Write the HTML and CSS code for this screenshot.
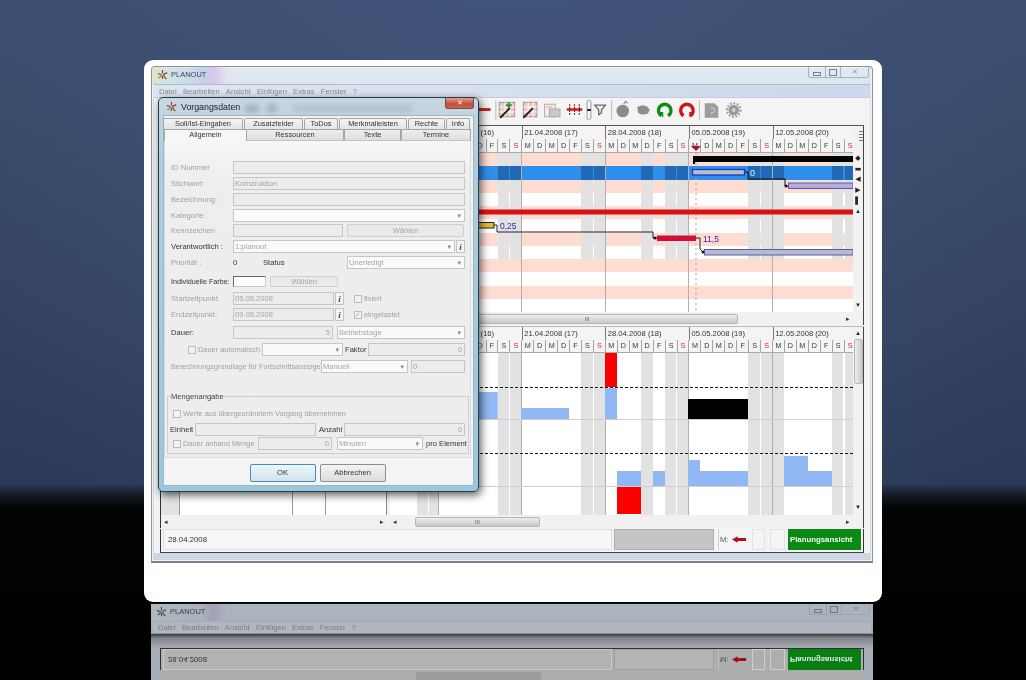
FILE: index.html
```html
<!DOCTYPE html>
<html lang="de">
<head>
<meta charset="utf-8">
<title>PLANOUT</title>
<link rel="stylesheet" href="styles.css">
</head>
<body>
<div class="stage">
  <div class="card">
    <div class="win">
      <div class="titlebar">
        <svg class="appicon" viewBox="0 0 12 12"><path d="M6 1v4M1 5l4 1M2 10l3-3M7 6l4-2M7 7l3 4M6 7v4" stroke="#7a4a3a" stroke-width="1.3" fill="none"/><path d="M7 6l4-2" stroke="#c03030" stroke-width="1.3"/><path d="M2 10l3-3" stroke="#c8a020" stroke-width="1.3"/></svg>
        <span class="apptitle">PLANOUT</span>
        <div class="winctl"><span class="wb wb-min"><b class="ic-min"></b></span><span class="wb wb-max"><b class="ic-max"></b></span><span class="wb wb-close">&#x2715;</span></div>
      </div>
      <div class="menubar"><span>Datei</span><span>Bearbeiten</span><span>Ansicht</span><span>Einfügen</span><span>Extras</span><span>Fenster</span><span>?</span></div>
      <div class="client">
        <div class="toolbar">
          <svg class="tb" width="400" height="26" viewBox="0 0 400 26">
            <rect x="1" y="11" width="12" height="3" fill="#c81e1e"/>
            <path d="M18.500 3v20M138.500 3v20M229.500 3v20" stroke="#b9b9b9"/>
            <g><rect x="22" y="5" width="16" height="15" fill="#f0c8c0" stroke="#9a9090"/><path d="M22 10h16M22 15h16M28 5v15M33 5v15" stroke="#fff"/><path d="M23 21l10-10" stroke="#222" stroke-width="2"/><path d="M32 5v6M29 8h6" stroke="#1f9a30" stroke-width="2"/></g>
            <g><rect x="47" y="5" width="14" height="15" fill="#f0c8c0" stroke="#9a9090"/><path d="M47 10h14M47 15h14M52 5v15M57 5v15" stroke="#fff"/><path d="M47 21l10-10" stroke="#222" stroke-width="2"/></g>
            <g><rect x="69" y="7" width="11" height="13" fill="#f6ece8" stroke="#b9a9a0"/><rect x="74" y="12" width="11" height="8" fill="#c9c9c9" stroke="#a9a9a9"/><path d="M71 10h6" stroke="#e09a90"/></g>
            <g><path d="M92 12.500h16" stroke="#d01818" stroke-width="2.500"/><path d="M95 7v11M100 7v11M105 7v11" stroke="#7c2020" stroke-width="1.200" stroke-dasharray="2 1"/></g>
            <rect x="113" y="3" width="4" height="20" rx="1.500" fill="#f6f6f6" stroke="#9a9a9a"/><rect x="113" y="12" width="4" height="2" fill="#222"/>
            <path d="M121 8h11l-4 5v3l-3 2v-5z" fill="#e8e8e8" stroke="#6a6a6a" stroke-width="1.300"/>
            <circle cx="150" cy="14" r="6.500" fill="#8c8c8c"/><path d="M151 7l2-3 2 2" stroke="#999" stroke-width="1.500" fill="none"/>
            <path d="M165 10l5-2 5 1 3 4-2 4-6 1-4-2z" fill="#8e8e8e"/>
            <path d="M190 19a6.500 6.500 0 1 1 7 0" stroke="#108a18" stroke-width="3.500" fill="none"/><path d="M187 15l5 0 0 6z" fill="#108a18"/>
            <path d="M213 19a6.500 6.500 0 1 1 7 0" stroke="#cc1414" stroke-width="3.500" fill="none"/><path d="M224 15l-5 0 0 6z" fill="#cc1414"/>
            <path d="M235 6h10l4 4v11h-14z" fill="#9c9c9c"/><path d="M241 11q4-1 4 2t-3 3v2" stroke="#c4c4c4" fill="none" stroke-width="1.300"/>
            <circle cx="265" cy="13" r="5.500" fill="#999"/><circle cx="265" cy="13" r="7" fill="none" stroke="#999" stroke-width="2" stroke-dasharray="2 1.600"/><circle cx="265" cy="13" r="2" fill="#d4d4d4"/>
          </svg>
        </div>

        <div class="pane pane-top">
          <div class="leftpane"></div>
          <div class="gantt">
            <div class="g-main">
              <div class="weeks"><span class="wk wk-first"></span><span class="wk">14.04.2008 (16)</span><span class="wk">21.04.2008 (17)</span><span class="wk">28.04.2008 (18)</span><span class="wk">05.05.2008 (19)</span><span class="wk">12.05.2008 (20)</span></div>
              <div class="days"><span>D</span><span>F</span><span>S</span><span class="sun">S</span><span>M</span><span>D</span><span>M</span><span>D</span><span>F</span><span>S</span><span class="sun">S</span><span>M</span><span>D</span><span>M</span><span>D</span><span>F</span><span>S</span><span class="sun">S</span><span>M</span><span>D</span><span>M</span><span>D</span><span>F</span><span>S</span><span class="sun">S</span><span>M</span><span>D</span><span>M</span><span>D</span><span>F</span><span>S</span><span class="sun">S</span><span>M</span><span>D</span><span>M</span><span>D</span><span>F</span><span>S</span><span class="sun">S</span></div>
              <div class="chart chart-top">
                <div class="row pink"></div><div class="row blue"></div><div class="row pink"></div><div class="row"></div>
                <div class="row pink"></div><div class="row"></div><div class="row pink"></div><div class="row"></div>
                <div class="row pink plain"></div><div class="row plain"></div><div class="row pink plain"></div><div class="row plain"></div>
                <svg class="overlay" width="463" height="159" viewBox="0 0 463 159">
                  <path d="M306 0v159" stroke="#c9aaaa" stroke-width="1.200" stroke-dasharray="2 3"/>
                  <path d="M301-7h10l-5 5z" fill="#a8122e"/>
                  <rect x="303" y="3" width="160" height="6" fill="#000"/><rect x="303" y="3" width="2" height="8" fill="#000"/>
                  <rect x="302.500" y="16.500" width="52" height="5.500" fill="#bcbcc6" stroke="#0c3cc0" stroke-width="1.300"/>
                  <text x="360" y="23" class="lbl-white">0</text>
                  <path d="M355 19h3v7h37v7h3" fill="none" stroke="#111"/><circle cx="396" cy="33" r="1.500" fill="#111"/>
                  <rect x="398.500" y="30" width="64.500" height="5.500" fill="#b4aed4" stroke="#5c54b8"/>
                  <rect x="0" y="56.500" width="463" height="5" fill="#dc1010"/>
                  <rect x="60" y="69.500" width="44" height="5.500" fill="#e6bf2c" stroke="#222"/>
                  <text x="110" y="76" class="lbl-blue">0,25</text>
                  <path d="M104 72h3v7h156v6h4" fill="none" stroke="#222"/><circle cx="265" cy="85" r="1.500" fill="#111"/>
                  <rect x="267" y="82.500" width="39" height="5.500" fill="#d00e38"/>
                  <text x="313" y="89" class="lbl-violet">11,5</text>
                  <path d="M306 85h4v11l3 3h2" fill="none" stroke="#222"/><circle cx="313" cy="99" r="1.500" fill="#111"/>
                  <rect x="314.500" y="96.500" width="148.500" height="5.500" fill="#babbc4" stroke="#5058c0"/>
                </svg>
              </div>
              <div class="hscroll"><span class="arr"></span><span class="thumb thumb-top">III</span><span class="arr arr-r">&#x25B8;</span></div>
            </div>
            <div class="g-side">
              <div class="ruler"></div>
              <span class="sb sb-dia">&#x25C6;</span><span class="sb">&#x25AC;</span><span class="sb">&#x25C0;</span><span class="sb">&#x25B6;</span><span class="sb">&#x258C;</span><span class="sb">&#x25B4;</span>
              <span class="sb sb-down">&#x25BE;</span>
            </div>
          </div>
        </div>

        <div class="pane pane-bottom">
          <div class="leftpane lp-lines">
            <div class="lp-body"></div>
            <div class="hscroll"><span class="arr">&#x25C2;</span><span class="arr arr-r">&#x25B8;</span></div>
          </div>
          <div class="gantt">
            <div class="g-main">
              <div class="weeks"><span class="wk wk-first"></span><span class="wk">14.04.2008 (16)</span><span class="wk">21.04.2008 (17)</span><span class="wk">28.04.2008 (18)</span><span class="wk">05.05.2008 (19)</span><span class="wk">12.05.2008 (20)</span></div>
              <div class="days"><span>D</span><span>F</span><span>S</span><span class="sun">S</span><span>M</span><span>D</span><span>M</span><span>D</span><span>F</span><span>S</span><span class="sun">S</span><span>M</span><span>D</span><span>M</span><span>D</span><span>F</span><span>S</span><span class="sun">S</span><span>M</span><span>D</span><span>M</span><span>D</span><span>F</span><span>S</span><span class="sun">S</span><span>M</span><span>D</span><span>M</span><span>D</span><span>F</span><span>S</span><span class="sun">S</span><span>M</span><span>D</span><span>M</span><span>D</span><span>F</span><span>S</span><span class="sun">S</span></div>
              <div class="chart chart-load load">
                <svg class="overlay" width="463" height="162" viewBox="0 0 463 162">
                  <g fill="#8fb8f4">
                    <rect x="215" y="35" width="12" height="32"/><rect x="60" y="39" width="47.700" height="28"/><rect x="131" y="55" width="48" height="12"/>
                    <rect x="227" y="118" width="24" height="15"/><rect x="263" y="118" width="12" height="15"/><rect x="298" y="107" width="12" height="26"/><rect x="310" y="118" width="48" height="15"/><rect x="394" y="103" width="24" height="30"/><rect x="418" y="118" width="24" height="15"/>
                  </g>
                  <g fill="#fb0000"><rect x="215" y="0" width="12" height="34"/><rect x="227" y="133" width="24" height="28"/></g>
                  <rect x="298" y="46" width="60" height="21" fill="#000"/>
                  <path d="M0 34.500h463M0 100.500h463" stroke="#111" stroke-dasharray="3 2"/>
                  <path d="M0 66.500h463M0 133.500h463" stroke="#cfcfcf"/>
                </svg>
              </div>
              <div class="hscroll"><span class="arr">&#x25C2;</span><span class="thumb thumb-bottom">III</span><span class="arr arr-r">&#x25B8;</span></div>
            </div>
            <div class="g-side">
              <span class="sb sb-up">&#x25B4;</span>
              <span class="vthumb"></span>
              <span class="sb sb-down2">&#x25BE;</span>
            </div>
          </div>
        </div>

        <div class="status">
          <span class="st-date">28.04.2008</span>
          <span class="st-progress"></span>
          <span class="st-m">M: <svg width="15" height="7" viewBox="0 0 16 7"><path d="M0 3.500L6 0v2h9v3H6v2z" fill="#b01020"/></svg></span>
          <span class="st-cell st-a"></span>
          <span class="st-cell st-b"></span>
          <span class="st-green">Planungsansicht</span>
        </div>
      </div>
    </div>

    <div class="dialog">
      <div class="dlg-title">
        <svg class="appicon" viewBox="0 0 12 12"><path d="M6 1v4M1 5l4 1M2 10l3-3M7 6l4-2M7 7l3 4M6 7v4" stroke="#7a4a3a" stroke-width="1.300" fill="none"/><path d="M7 6l4-2" stroke="#c03030" stroke-width="1.300"/><path d="M2 10l3-3" stroke="#c8a020" stroke-width="1.300"/></svg>
        <span class="dlg-name">Vorgangsdaten</span>
        <span class="ghost ghost-a"></span><span class="ghost ghost-b"></span><span class="ghost ghost-c"></span>
        <span class="dlg-close">&#x2715;</span>
      </div>
      <div class="dlg-client">
        <div class="tabs-back"><span class="t1">Soll/Ist-Eingaben</span><span class="t2">Zusatzfelder</span><span class="t3">ToDos</span><span class="t4">Merkmalleisten</span><span class="t5">Rechte</span><span class="t6">Info</span></div>
        <div class="tabs-front"><span class="tf1">Allgemein</span><span class="tf2">Ressourcen</span><span class="tf3">Texte</span><span class="tf4">Termine</span></div>
        <div class="panel">
          <div class="frow"><label class="lb">ID Nummer</label><span class="f w232"></span></div>
          <div class="frow"><label class="lb">Stichwort:</label><span class="f w232">Konstruktion</span></div>
          <div class="frow"><label class="lb">Bezeichnung:</label><span class="f w232"></span></div>
          <div class="frow"><label class="lb">Kategorie:</label><span class="f white combo w232"></span></div>
          <div class="frow tight"><label class="lb">Kennzeichen</label><span class="f w110"></span><span class="btn w117 ml4">Wählen</span></div>
          <div class="frow"><label class="lb dark">Verantwortlich :</label><span class="f white combo w222">1:planout</span><span class="info ml1">i</span></div>
          <div class="frow"><label class="lb">Priorität :</label><span class="val w30">0</span><span class="val w84 dark">Status</span><span class="f white combo w118">Unerledigt</span></div>
          <div class="frow mt3"><label class="lb lb-tight dark">Individuelle Farbe:</label><span class="swatch"></span><span class="btn w68 ml4 h11">Wählen</span></div>
          <div class="frow mt1"><label class="lb">Startzeitpunkt:</label><span class="f w101">05.05.2008</span><span class="info ml1">i</span><span class="cb ml10"></span><span class="cbl">fixiert</span></div>
          <div class="frow"><label class="lb">Endzeitpunkt:</label><span class="f w101">09.05.2008</span><span class="info ml1">i</span><span class="cb ml10">&#x2713;</span><span class="cbl">eingelastet</span></div>
          <div class="frow mt2"><label class="lb dark">Dauer:</label><span class="f w100 num">5</span><span class="f white combo w128 ml4">Betriebstage</span></div>
          <div class="frow mt1"><span class="cb ml17"></span><span class="cbl w64">Dauer automatisch</span><span class="f white combo w81"></span><span class="val w23 ml2 dark">Faktor</span><span class="f w97 num">0</span></div>
          <div class="frow mt1"><span class="cbl w150 noml">Berechnungsgrundlage für Fortschrittsanzeige</span><span class="f white combo w87">Manuell</span><span class="f w54 ml3">0</span></div>
          <fieldset class="fs">
            <legend>Mengenangabe</legend>
            <div class="frow"><span class="cb ml3"></span><span class="cbl">Werte aus übergeordnetem Vorgang übernehmen</span></div>
            <div class="frow mt3"><span class="val w25 dark">Einheit</span><span class="f w121"></span><span class="val w25 ml3 dark">Anzahl</span><span class="f w121 num">0</span></div>
            <div class="frow mt1"><span class="cb ml3"></span><span class="cbl w75">Dauer anhand Menge</span><span class="f w74 num">0</span><span class="f white combo w86 ml5">Minuten</span><span class="val ml3 dark">pro Element</span></div>
          </fieldset>
        </div>
        <div class="dlg-foot"><span class="dbtn dbtn-ok">OK</span><span class="dbtn">Abbrechen</span></div>
      </div>
    </div>
  </div>

  <div class="mirror">
    <div class="titlebar m-title">
      <svg class="appicon" viewBox="0 0 12 12"><path d="M6 1v4M1 5l4 1M2 10l3-3M7 6l4-2M7 7l3 4M6 7v4" stroke="#5a4a4a" stroke-width="1.300" fill="none"/></svg>
      <span class="apptitle">PLANOUT</span>
      <div class="winctl"><span class="wb wb-min"><b class="ic-min"></b></span><span class="wb wb-max"><b class="ic-max"></b></span><span class="wb wb-close">&#x2715;</span></div>
    </div>
    <div class="menubar m-menu"><span>Datei</span><span>Bearbeiten</span><span>Ansicht</span><span>Einfügen</span><span>Extras</span><span>Fenster</span><span>?</span></div>
    <div class="m-gap"></div>
    <div class="m-body">
      <div class="status m-status">
        <span class="st-date">28.04.2008</span>
        <span class="st-progress"></span>
        <span class="st-m">M: <svg width="15" height="7" viewBox="0 0 16 7"><path d="M0 3.500L6 0v2h9v3H6v2z" fill="#b01020"/></svg></span>
        <span class="st-cell st-a"></span>
        <span class="st-cell st-b"></span>
        <span class="st-green">Planungsansicht</span>
      </div>
      <div class="m-scroll"><span class="m-thumb"></span></div>
    </div>
  </div>
</div>
</body>
</html>
```

FILE: styles.css
```css
* { box-sizing: border-box; }
html, body { margin: 0; padding: 0; }
body {
  width: 1026px;
  height: 680px;
  overflow: hidden;
  font-family: "Liberation Sans", Arial, sans-serif;
  font-size: 7.600px;
  color: #222;
  background:
    radial-gradient(ellipse 560px 420px at 513px 250px, rgba(92, 118, 170, .28), rgba(92, 118, 170, 0)) 0 0 / 100% 486px no-repeat,
    linear-gradient(180deg, #3d4f72 0, #33425f 300px, #2b3a56 484px, #12171f 497px, #020304 508px, #000 680px);
}
.stage { padding: 60px 0 0 144px; }

/* white card */
.card {
  position: relative;
  width: 738px;
  height: 542px;
  background: #fff;
  border-radius: 9px;
  padding: 6px 8px 0 7px;
  filter: blur(0.3px);
}

/* main window */
.win {
  width: 722px;
  height: 497px;
  border: 1px solid #8b949c;
  border-bottom: 2px solid #7a8188;
  border-radius: 4px 4px 0 0;
  background: linear-gradient(180deg, #e2eaf3 0, #d9e3ee 30px, #cdd8e3 100%);
  padding: 0 2px;
  box-shadow: inset 0 0 0 1px #eef3f8;
}
.titlebar {
  height: 17px;
  margin: 0 -2px;
  padding: 0 3px 2px 5px;
  display: flex;
  align-items: center;
  gap: 3px;
  background:
    linear-gradient(90deg, rgba(225, 220, 140, .45) 0, rgba(190, 225, 200, .4) 12px, rgba(160, 200, 235, .35) 36px, rgba(170, 180, 230, .5) 52px, rgba(215, 170, 225, .55) 62px, rgba(220, 225, 235, 0) 76px);
}
.appicon { width: 11px; height: 11px; flex: none; }
.apptitle { font-size: 7.500px; color: #444; }
.winctl { margin-left: auto; align-self: flex-start; display: flex; height: 11px; }
.wb {
  display: flex; align-items: center; justify-content: center;
  height: 11px; border: 1px solid #a9b2bb; border-top: 0; margin-left: -1px;
  font-size: 7px; color: #8a929a;
}
.wb-min { width: 18px; border-radius: 0 0 0 3px; }
.wb-max { width: 16px; }
.wb-close { width: 29px; border-radius: 0 0 3px 0; }
.ic-min { display: block; width: 8px; height: 4px; border: 1px solid #7a828a; margin-top: 3px; }
.ic-max { display: block; width: 8px; height: 7px; border: 1px solid #7a828a; }
.menubar {
  height: 13px;
  display: flex;
  align-items: center;
  gap: 6.200px;
  padding-left: 5px;
  color: #858992;
  background: linear-gradient(90deg, #dde6f0, #cfd8ec 100%);
  border-top: 1px solid #b4bcc6;
}
.client {
  height: 456px;
  padding: 0 6px 0 6px;
  background: #f3f3f3;
  border-top: 1px solid #c9c9e0;
}
.toolbar { height: 27px; display: flex; align-items: center; padding: 0 0 3px 318px; background: #f4f4f4; }
.tb { display: block; }

/* panes */
.pane { display: flex; border-top: 1px solid #555; }
.pane-top { height: 200px; }
.pane-bottom { height: 202px; margin-top: 1px; border-top-color: #bbb; }
.leftpane { width: 227px; margin-right: 3px; background: #fff; border-left: 1px solid #333; flex: none; }
.lp-lines { display: flex; flex-direction: column; }
.lp-body {
  flex: 1;
  background:
    linear-gradient(90deg, #e2e2e2 0, #e2e2e2 18px, #9a9a9a 18px, #9a9a9a 19px, #fff 19px, #fff 131px, #999 131px, #999 132px, #fff 132px, #fff 164px, #999 164px, #999 165px, #fff 165px, #fff 225px, #888 225px, #888 226px, #fff 226px);
}
.gantt { display: flex; width: 474px; flex: none; }
.g-main { width: 463px; flex: none; overflow: hidden; }
.g-side { width: 11px; flex: none; display: flex; flex-direction: column; align-items: center; background: #f2f2f2; border-right: 1px solid #444; position: relative; }
.weeks { display: flex; height: 13px; background: #f4f4f4; }
.wk {
  width: 83.670px; flex: none;
  padding-left: 1.500px;
  border-left: 1px solid #777;
  line-height: 13px;
  font-size: 7.600px;
  white-space: nowrap;
  overflow: hidden;
  color: #333;
}
.wk-first { width: 48px; border-left: 0; }
.days { display: flex; height: 14px; background: #f4f4f4; border-bottom: 1px solid #aaa; }
.pane-bottom .days { height: 13px; }
.days span {
  width: 11.950px; flex: none;
  text-align: center;
  line-height: 13px;
  font-size: 7.200px;
  border-left: 1px solid #a5a5a5;
  color: #333;
}
.pane-bottom .days span { line-height: 12px; }
.days .sun { color: #d81f3a; }

.chart { position: relative; overflow: visible; }
.chart::after {
  content: "";
  position: absolute; inset: 0;
  background: linear-gradient(90deg, transparent 0, transparent 47.500px, #b0b0b0 47.500px, #b0b0b0 48.500px, transparent 48.500px, transparent 131.200px, #b0b0b0 131.200px, #b0b0b0 132.200px, transparent 132.200px, transparent 214.800px, #b0b0b0 214.800px, #b0b0b0 215.800px, transparent 215.800px, transparent 298.500px, #b0b0b0 298.500px, #b0b0b0 299.500px, transparent 299.500px, transparent 382px, #b0b0b0 382px, #b0b0b0 383px, transparent 383px);
  pointer-events: none;
}
.chart-top { height: 159px; }
.chart-load { height: 162px; }
.overlay { position: absolute; left: 0; top: 0; z-index: 2; overflow: visible; }
.row { height: 13.250px; --s: #e2e2e2; --b: #fff; }
.pink { --b: #fddcd2; }
.blue { --s: #2268b4; --b: #2e8eec; }
.row, .load {
  background-color: var(--b);
  background-image: linear-gradient(90deg,
    transparent 27px, var(--s) 27px, var(--s) 37.500px, transparent 37.500px, transparent 38.500px, var(--s) 38.500px, var(--s) 48px, transparent 48px,
    transparent 107.500px, var(--s) 107.500px, var(--s) 119.200px, transparent 119.200px, transparent 120.200px, var(--s) 120.200px, var(--s) 131.500px, transparent 131.500px,
    transparent 191px, var(--s) 191px, var(--s) 202.800px, transparent 202.800px, transparent 203.800px, var(--s) 203.800px, var(--s) 215px, transparent 215px,
    transparent 251px, var(--s) 251px, var(--s) 262.500px, transparent 262.500px,
    transparent 275px, var(--s) 275px, var(--s) 286.500px, transparent 286.500px, transparent 287.500px, var(--s) 287.500px, var(--s) 298.500px, transparent 298.500px,
    transparent 358px, var(--s) 358px, var(--s) 370px, transparent 370px, transparent 371px, var(--s) 371px, var(--s) 394px, transparent 394px,
    transparent 442px, var(--s) 442px, var(--s) 453.500px, transparent 453.500px, transparent 454.500px, var(--s) 454.500px, var(--s) 463px, transparent 463px);
}
.load { --s: #e2e2e2; --b: #fff; }
.row.plain { background-image: none; }
.lbl-white { font-size: 9px; fill: #e8f2ff; font-family: "Liberation Sans", sans-serif; }
.lbl-blue { font-size: 8.500px; fill: #2828a8; font-family: "Liberation Sans", sans-serif; }
.lbl-violet { font-size: 8.500px; fill: #5420a8; font-family: "Liberation Sans", sans-serif; }

.hscroll { height: 13px; display: flex; align-items: center; background: #f1f1f1; padding: 0 3px; color: #333; font-size: 7px; }
.arr { width: 8px; flex: none; }
.arr-r { margin-left: auto; text-align: right; }
.thumb {
  height: 10px; display: block; text-align: center;
  line-height: 9px; font-size: 6px; color: #666;
  background: linear-gradient(180deg, #ededed, #c9c9c9);
  border: 1px solid #b5b5b5; border-radius: 2px;
}
.thumb-top { width: 302px; margin-left: 35px; }
.thumb-bottom { width: 125px; margin-left: 14px; }

.ruler { height: 27px; width: 100%; background: repeating-linear-gradient(180deg, #f2f2f2 0, #f2f2f2 2px, #777 2px, #777 3px); background-size: 4px 12px; background-repeat: no-repeat; background-position: 6px 3px; flex: none; }
.sb { height: 10.700px; line-height: 10.700px; font-size: 7px; color: #222; font-family: "DejaVu Sans", sans-serif; flex: none; }
.sb-down { margin-top: auto; margin-bottom: 14px; }
.sb-up { margin-top: 1px; }
.vthumb { width: 9px; height: 45px; background: linear-gradient(90deg, #ececec, #c9c9c9); border: 1px solid #b9b9b9; border-radius: 2px; flex: none; }
.sb-down2 { margin-top: auto; margin-bottom: 15px; }

/* status */
.status { display: flex; align-items: stretch; height: 24px; margin-top: 1px; border-bottom: 1px solid #444; padding-bottom: 2px; background: #f4f4f4; border-left: 1px solid #333; border-right: 1px solid #333; }
.st-date { width: 449px; margin-left: 2px; border: 1px solid #dcdcdc; padding-left: 4px; line-height: 19px; background: #f6f6f6; font-size: 7.800px; color: #333; }
.st-progress { width: 100px; margin-left: 2px; background: #c5c5c5; border: 1px solid #aeaeae; }
.st-m { width: 30px; margin-left: 4px; line-height: 19px; border-left: 1px solid #d0d0d0; padding-left: 1px; color: #555; display: flex; align-items: center; gap: 4px; }
.st-cell { border: 1px solid #e2e2e2; }
.st-a { width: 13px; margin-left: 4px; }
.st-b { width: 15px; margin-left: 5px; }
.st-green { width: 73px; margin-left: 3px; background: #0a8a15; color: #f2fff2; font-weight: bold; font-size: 7.800px; line-height: 21px; padding-left: 2px; white-space: nowrap; }

/* dialog */
.dialog {
  position: absolute;
  left: 14px; top: 37px;
  z-index: 5;
  width: 321px; height: 395px;
  padding: 0 4px 5px;
  border: 1px solid #203f50;
  border-radius: 5px;
  background: linear-gradient(180deg, #c9d6e2 0, #aecde0 60px, #9cc6dc 100%);
  box-shadow: 2px 3px 8px rgba(0, 0, 0, .65);
  display: flex; flex-direction: column;
}
.dlg-title { height: 17px; position: relative; display: flex; align-items: center; gap: 4px; padding-left: 3px; flex: none; }
.dlg-name { font-size: 8.800px; color: #222; }
.ghost { position: absolute; top: 6px; height: 9px; border-radius: 4px; background: rgba(90, 100, 125, .28); filter: blur(2px); }
.ghost-a { left: 82px; width: 14px; }
.ghost-b { left: 104px; width: 10px; }
.ghost-c { left: 130px; width: 120px; background: rgba(110, 120, 145, .16); }
.dlg-close {
  position: absolute; right: 0; top: 0;
  width: 29px; height: 11px;
  background: linear-gradient(180deg, #e4a090, #c84a34 60%, #c0695a);
  border: 1px solid #7a4a44; border-top: 0;
  border-radius: 0 0 3px 3px;
  color: #fff; text-align: center; line-height: 10px; font-size: 7px;
}
.dlg-client { flex: 1; background: #f2f2f2; border: 1px solid #9fb6c4; display: flex; flex-direction: column; padding-top: 2px; }
.tabs-back, .tabs-front { display: flex; flex: none; }
.tabs-back { height: 11px; margin-left: -1px; }
.tabs-back span {
  text-align: center; line-height: 10px; font-size: 7.400px; color: #333;
  background: linear-gradient(180deg, #f4f4f4, #e4e4e4);
  border: 1px solid #a5a5a5; border-bottom: 0; border-radius: 2px 2px 0 0;
  margin-right: 1px; flex: none;
}
.t1 { width: 80px; } .t2 { width: 59px; } .t3 { width: 34px; } .t4 { width: 68px; } .t5 { width: 37px; } .t6 { width: 24px; }
.tabs-front { height: 12px; }
.tabs-front span {
  text-align: center; line-height: 10px; font-size: 7.400px; color: #333; flex: none;
  background: linear-gradient(180deg, #eeeeee, #dedede);
  border: 1px solid #a5a5a5; border-bottom-color: #c4c4c4;
}
.tabs-front .tf1 { width: 82px; background: #f6f6f6; border-bottom: 0; border-right: 0; }
.tf2 { width: 98px; } .tf3 { width: 57px; } .tf4 { width: 70px; }
.panel {
  height: 317px; flex: none;
  padding: 20px 5px 0 6px;
  margin: 0 2px 0 0;
  background: linear-gradient(180deg, #f6f6f6 0, #eeeeee 40px, #ededed 100%);
  border: 1px solid #dadada; border-top: 0;
  display: flex; flex-direction: column; gap: 3px;
}
.frow { display: flex; align-items: center; height: 13px; flex: none; color: #9a9a9a; white-space: nowrap; }
.frow.tight { margin-top: -1px; }
.mt1 { margin-top: 1px; } .mt2 { margin-top: 2px; } .mt3 { margin-top: 3px; }
.lb { width: 62px; flex: none; color: #a0a0a0; }
.lb-tight { font-size: 7.200px; }
.lb.dark, .val.dark { color: #333; }
.f {
  display: block; height: 13px; flex: none;
  padding-left: 1px;
  line-height: 12px;
  background: #ececec;
  border: 1px solid #c6c6c6;
  color: #a5a5a5;
  overflow: hidden;
  position: relative;
}
.f.white { background: #fafafa; }
.f.num { text-align: right; padding-right: 2px; }
.combo::after {
  content: "\25BE";
  position: absolute; right: 3px; top: 0;
  font-family: "DejaVu Sans", sans-serif; font-size: 7px; color: #888;
}
.w232 { width: 232px; } .w222 { width: 222px; } .w110 { width: 110px; } .w117 { width: 117px; } .w118 { width: 118px; } .w68 { width: 68px; }
.w101 { width: 101px; } .w100 { width: 100px; } .w128 { width: 128px; } .w81 { width: 81px; } .w97 { width: 97px; } .w87 { width: 87px; }
.w54 { width: 54px; } .w121 { width: 121px; } .w74 { width: 74px; } .w75 { width: 75px; } .w86 { width: 86px; }
.w30 { width: 30px; } .w84 { width: 84px; } .w25 { width: 25px; } .w23 { width: 23px; } .w64 { width: 64px; } .w150 { width: 150px; }
.ml1 { margin-left: 1px; } .ml2 { margin-left: 2px; } .ml3 { margin-left: 3px; } .ml4 { margin-left: 4px; } .ml5 { margin-left: 5px; } .ml10 { margin-left: 10px; } .ml17 { margin-left: 17px; }
.val { flex: none; color: #333; }
.btn { display: block; height: 13px; line-height: 12px; text-align: center; flex: none; background: #eaeaea; border: 1px solid #cfcfcf; border-radius: 2px; color: #a5a5a5; }
.h11 { height: 11px; line-height: 10px; }
.swatch { width: 33px; height: 11px; background: #fff; border: 1px solid #c9c9c9; border-top-color: #666; border-left-color: #666; flex: none; }
.info { width: 9px; height: 13px; flex: none; text-align: center; line-height: 12px; font-family: "Liberation Serif", serif; font-style: italic; font-weight: bold; font-size: 9px; color: #444; background: #f4f4f4; border: 1px solid #c4c4c4; }
.cb { width: 8px; height: 8px; flex: none; background: #f3f3f3; border: 1px solid #bcbcbc; font-size: 7px; line-height: 6px; color: #aaa; font-family: "DejaVu Sans", sans-serif; }
.cbl { margin-left: 2px; color: #a0a0a0; flex: none; font-size: 7.400px; }
.cbl.noml { margin-left: 0; font-size: 7.300px; }
.fs {
  margin: 16px -4px 0 -4px; padding: 6px 3px 0 2px;
  height: 62px;
  border: 1px solid #cfcfcf;
  display: flex; flex-direction: column;
  min-width: 0;
}
.fs legend { padding: 0; margin-left: 1px; line-height: 9px; color: #444; }
.dlg-foot { flex: 1; display: flex; justify-content: center; align-items: center; gap: 4px; padding: 3px 2px 0 0; background: #f4f4f4; }
.dbtn { width: 66px; height: 18px; text-align: center; line-height: 16px; color: #333; background: linear-gradient(180deg, #f4f4f4, #dcdcdc); border: 1px solid #8e8e8e; border-radius: 2px; }
.dbtn-ok { background: linear-gradient(180deg, #eef7fb, #cfe3ee); border-color: #3d8fb4; }

/* reflection */
.mirror {
  width: 722px;
  margin: 1px 0 0 7px;
  height: 77px;
  border-top: 1px solid #111;
  overflow: hidden;
  opacity: .92;
  filter: blur(0.35px);
  background: #b5bcc6;
}
.m-title { height: 17px; background: linear-gradient(90deg, #bfc8cf, #b8c2cf 50px, #b4aec9 62px, #b8c4d0 76px); margin: 0; }
.m-menu { height: 13px; margin: 0 2px; background: #c0c6d0; border-bottom: 1px solid #999; }
.m-gap { height: 14px; background: linear-gradient(180deg, #3a3f45, #8a8f96 4px, #b9bdc3 100%); }
.m-body { margin: 0 9px 0 9px; border-top: 1px solid #333; }
.m-status { transform: scaleY(-1); height: 21px; margin: 0; padding: 0; border-bottom: 0; background: #bdbdbd; }
.m-status .st-date { background: #c2c2c2; }
.m-scroll { height: 14px; background: #bbb; padding: 2px 0 0 256px; }
.m-thumb { display: block; height: 10px; width: 125px; background: #aaa; }
```
